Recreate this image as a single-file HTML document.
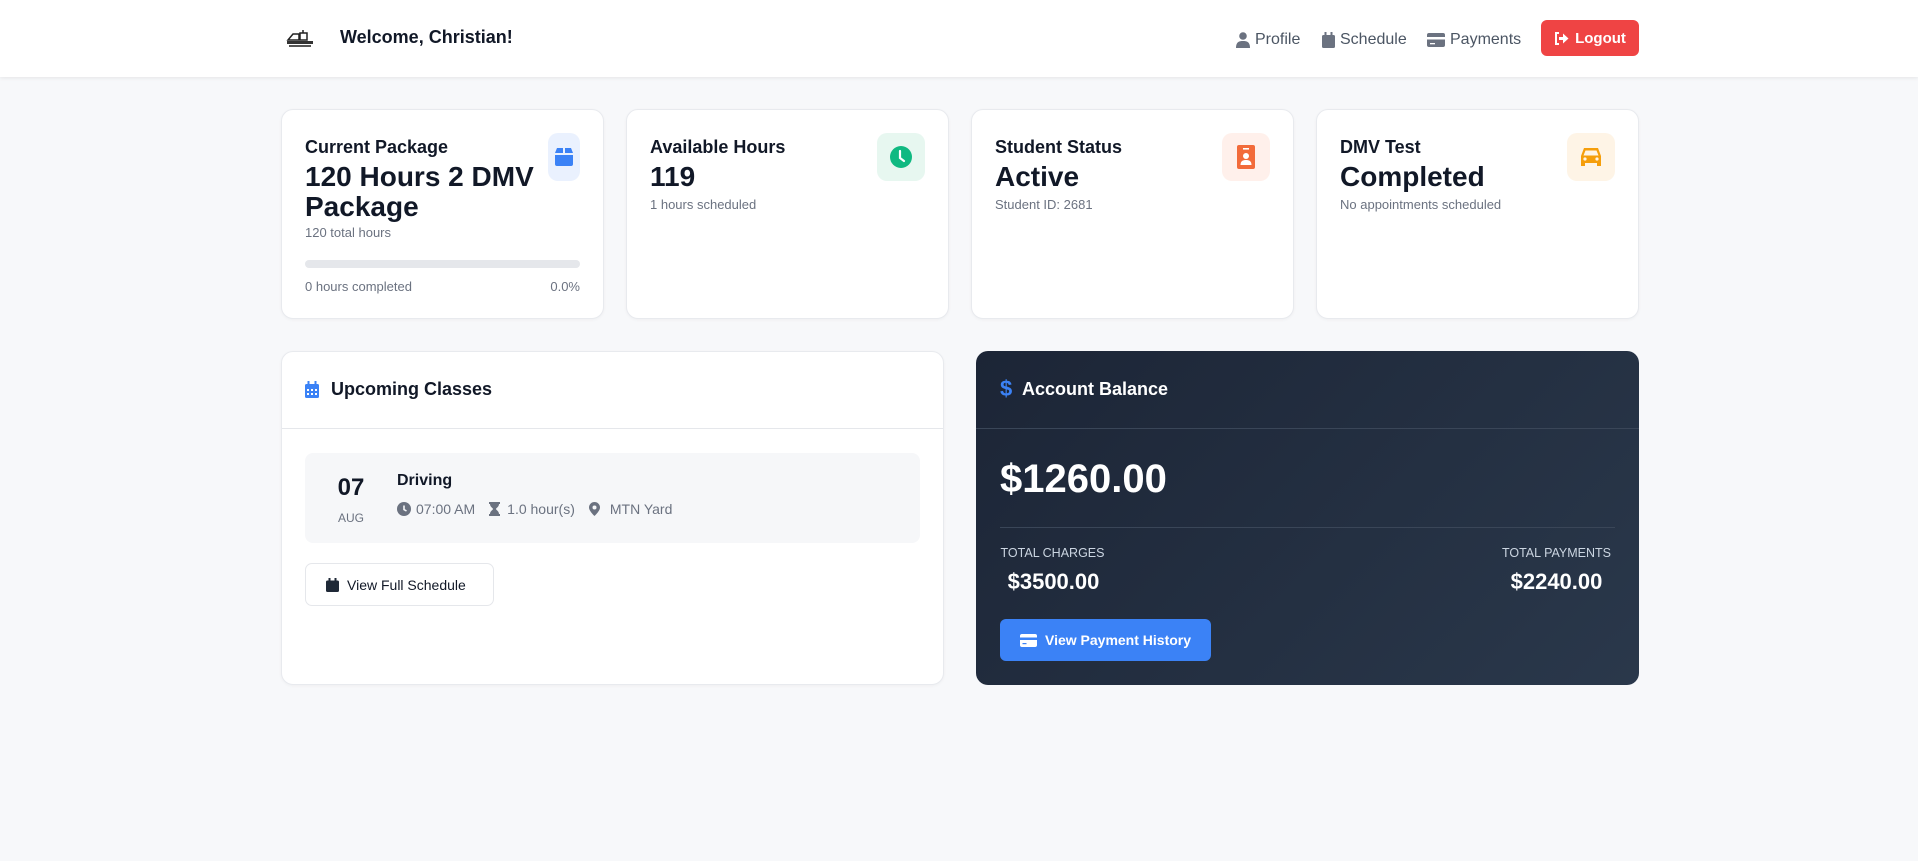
<!DOCTYPE html>
<html><head><meta charset="utf-8"><style>
*{box-sizing:border-box;margin:0;padding:0}
body{width:1918px;height:861px;background:#f7f8fa;font-family:"Liberation Sans",sans-serif;color:#111827;position:relative;overflow:hidden}
.abs{position:absolute}
.hdr{left:0;top:0;width:1918px;height:77px;background:#fff;box-shadow:0 1px 4px rgba(0,0,0,.08)}
.nav{color:#4b5563;font-size:16px;top:31px;display:flex;align-items:center;gap:5px}
.card{background:#fff;border:1px solid #e8eaee;border-radius:12px;box-shadow:0 1px 3px rgba(0,0,0,.04)}
.sc{top:109px;width:323px;height:210px}
.t{font-size:18px;font-weight:bold;color:#111827;white-space:nowrap}
.big{font-size:28px;font-weight:bold;color:#111827;line-height:30px}
.sub{font-size:13px;color:#6b7280}
.ib{width:48px;height:48px;border-radius:10px;display:flex;align-items:center;justify-content:center}
.meta{font-size:14px;color:#6b7280;display:flex;align-items:center}
</style></head><body>
<div class="abs hdr"></div>
<svg class="abs" style="left:285px;top:30px" width="32" height="18" viewBox="0 0 32 18"><path d="M3 10 L8 4 H14 V10 Z M15 3 H22 V10 H15 Z M18 0 V3" fill="none" stroke="#222" stroke-width="1.5"/><rect x="2" y="11" width="26" height="3" fill="#333"/><rect x="4" y="15" width="22" height="2" fill="#555"/></svg>
<div class="abs" style="left:340px;top:27px;font-size:18px;font-weight:bold;color:#111827">Welcome, Christian!</div>
<div class="abs nav" style="left:1236px"><svg width="14" height="16" viewBox="0 0 14 16"><circle cx="7" cy="4" r="3.8" fill="#6b7280"/><path d="M0 16 C0 10 3 9 7 9 C11 9 14 10 14 16Z" fill="#6b7280"/></svg><span>Profile</span></div>
<div class="abs nav" style="left:1322px"><svg width="13" height="16" viewBox="0 0 13 16"><rect x="0" y="3" width="13" height="13" rx="1.5" fill="#6b7280"/><rect x="2.5" y="0" width="2" height="4" fill="#6b7280"/><rect x="8.5" y="0" width="2" height="4" fill="#6b7280"/></svg><span>Schedule</span></div>
<div class="abs nav" style="left:1427px"><svg width="18" height="14" viewBox="0 0 18 14"><rect x="0" y="0" width="18" height="14" rx="2" fill="#6b7280"/><rect x="0" y="4" width="18" height="2.5" fill="#fff"/><rect x="3" y="10" width="5" height="1.3" fill="#fff"/></svg><span>Payments</span></div>
<div class="abs" style="left:1541px;top:20px;width:98px;height:36px;background:#ef4444;border-radius:6px;color:#fff;font-size:15px;font-weight:bold;display:flex;align-items:center;justify-content:center;gap:6px"><svg width="15" height="13" viewBox="0 0 15 13"><path d="M5 1H2v11h3" fill="none" stroke="#fff" stroke-width="2"/><path d="M5 5h4V1.5L14.5 6.5 9 11.5V8H5z" fill="#fff"/></svg>Logout</div>

<div class="abs card sc" style="left:281px"></div>
<div class="abs t" style="left:305px;top:137px">Current Package</div>
<div class="abs big" style="left:305px;top:162px;width:250px">120 Hours 2 DMV Package</div>
<div class="abs sub" style="left:305px;top:225px">120 total hours</div>
<div class="abs" style="left:305px;top:260px;width:275px;height:8px;background:#e5e7eb;border-radius:4px"></div>
<div class="abs sub" style="left:305px;top:279px">0 hours completed</div>
<div class="abs sub" style="left:550px;top:279px;width:30px;text-align:right">0.0%</div>
<div class="abs ib" style="left:548px;top:133px;width:32px;background:#eaf1fe"><svg width="20" height="18" viewBox="0 0 20 18"><path d="M1 7H19V16a2 2 0 0 1-2 2H3a2 2 0 0 1-2-2Z M1 5 3 0H9V5Z M11 5V0H17L19 5Z" fill="#3b82f6"/></svg></div>

<div class="abs card sc" style="left:626px"></div>
<div class="abs t" style="left:650px;top:137px">Available Hours</div>
<div class="abs big" style="left:650px;top:162px">119</div>
<div class="abs sub" style="left:650px;top:197px">1 hours scheduled</div>
<div class="abs ib" style="left:877px;top:133px;background:#e7f7f0"><svg width="24" height="24" viewBox="0 0 24 24"><circle cx="12" cy="12" r="11" fill="#10b981"/><path d="M11 6v7l4 3" fill="none" stroke="#fff" stroke-width="2.2" stroke-linecap="round"/></svg></div>

<div class="abs card sc" style="left:971px"></div>
<div class="abs t" style="left:995px;top:137px">Student Status</div>
<div class="abs big" style="left:995px;top:162px">Active</div>
<div class="abs sub" style="left:995px;top:197px">Student ID: 2681</div>
<div class="abs ib" style="left:1222px;top:133px;background:#fff0eb"><svg width="18" height="24" viewBox="0 0 18 24"><rect width="18" height="24" rx="2" fill="#f26b3a"/><rect x="6" y="3" width="6" height="1.6" fill="#fff"/><circle cx="9" cy="11" r="3" fill="#fff"/><path d="M3.5 20c0-4 2.5-5 5.5-5s5.5 1 5.5 5z" fill="#fff"/></svg></div>

<div class="abs card sc" style="left:1316px"></div>
<div class="abs t" style="left:1340px;top:137px">DMV Test</div>
<div class="abs big" style="left:1340px;top:162px">Completed</div>
<div class="abs sub" style="left:1340px;top:197px">No appointments scheduled</div>
<div class="abs ib" style="left:1567px;top:133px;background:#fef4e6"><svg width="24" height="22" viewBox="0 0 24 22"><path d="M5 2h14l3 8v10h-4v-3H6v3H2V10Z" fill="#f59e0b"/><path d="M6.5 4.5h11l2 5h-15z" fill="#fef4e6"/><circle cx="6" cy="13" r="1.6" fill="#fef4e6"/><circle cx="18" cy="13" r="1.6" fill="#fef4e6"/></svg></div>

<div class="abs card" style="left:281px;top:351px;width:663px;height:334px"></div>
<div class="abs" style="left:282px;top:428px;width:661px;height:1px;background:#e5e7eb"></div>
<svg class="abs" style="left:305px;top:381px" width="14" height="17" viewBox="0 0 14 17"><rect y="3" width="14" height="14" rx="1.5" fill="#3b82f6"/><rect x="2.5" width="2" height="4" fill="#3b82f6"/><rect x="9.5" width="2" height="4" fill="#3b82f6"/><g fill="#fff"><rect x="2" y="8" width="2" height="2"/><rect x="6" y="8" width="2" height="2"/><rect x="10" y="8" width="2" height="2"/><rect x="2" y="12" width="2" height="2"/><rect x="6" y="12" width="2" height="2"/><rect x="10" y="12" width="2" height="2"/></g></svg>
<div class="abs t" style="left:331px;top:379px">Upcoming Classes</div>
<div class="abs" style="left:305px;top:453px;width:615px;height:90px;background:#f6f7f9;border-radius:8px"></div>
<div class="abs" style="left:326px;top:474px;width:50px;text-align:center;font-size:24px;font-weight:bold">07</div>
<div class="abs" style="left:326px;top:511px;width:50px;text-align:center;font-size:12px;color:#6b7280">AUG</div>
<div class="abs" style="left:397px;top:472px;font-size:16px;font-weight:bold">Driving</div>
<div class="abs meta" style="left:397px;top:501px">
<svg width="14" height="14" viewBox="0 0 14 14"><circle cx="7" cy="7" r="7" fill="#6b7280"/><path d="M7 3.5V7.5L9.5 9" fill="none" stroke="#f6f7f9" stroke-width="1.6"/></svg><span style="margin-left:5px">07:00 AM</span>
<svg style="margin-left:14px" width="11" height="14" viewBox="0 0 11 14"><path d="M0 0h11v2H10C10 5 7 6 7 7s3 2 3 5h1v2H0v-2h1c0-3 3-4 3-5S1 5 1 2H0z" fill="#6b7280"/></svg><span style="margin-left:7px">1.0 hour(s)</span>
<svg style="margin-left:14px" width="11" height="14" viewBox="0 0 11 14"><path d="M5.5 0A5.5 5.5 0 0 1 11 5.5C11 9 5.5 14 5.5 14S0 9 0 5.5A5.5 5.5 0 0 1 5.5 0Z" fill="#6b7280"/><circle cx="5.5" cy="5.5" r="2" fill="#f6f7f9"/></svg><span style="margin-left:10px">MTN Yard</span></div>
<div class="abs" style="left:305px;top:563px;width:189px;height:43px;border:1px solid #e5e7eb;border-radius:7px;background:#fff;display:flex;align-items:center;padding-left:20px;font-size:14px;color:#111827"><svg width="13" height="14" viewBox="0 0 13 14"><rect y="2.5" width="13" height="11.5" rx="1.5" fill="#1f2937"/><rect x="2.5" width="2" height="3" fill="#1f2937"/><rect x="8.5" width="2" height="3" fill="#1f2937"/></svg><span style="margin-left:8px">View Full Schedule</span></div>

<div class="abs" style="left:976px;top:351px;width:663px;height:334px;border-radius:12px;background:linear-gradient(135deg,#1c2536,#2a384b)"></div>
<div class="abs" style="left:976px;top:428px;width:663px;height:1px;background:#3a4658"></div>
<div class="abs" style="left:1000px;top:376px;font-size:22px;font-weight:bold;color:#3b82f6">$</div>
<div class="abs t" style="left:1022px;top:379px;color:#fff">Account Balance</div>
<div class="abs" style="left:1000px;top:457px;font-size:40px;font-weight:bold;color:#fff">$1260.00</div>
<div class="abs" style="left:1000px;top:527px;width:615px;height:1px;background:#3a4658"></div>
<div class="abs" style="left:1000px;top:546px;width:105px;text-align:center;color:#cbd5e1;font-size:12.5px">TOTAL CHARGES</div>
<div class="abs" style="left:996px;top:569px;width:115px;text-align:center;color:#fff;font-size:22px;font-weight:bold">$3500.00</div>
<div class="abs" style="left:1498px;top:546px;width:117px;text-align:center;color:#cbd5e1;font-size:12.5px">TOTAL PAYMENTS</div>
<div class="abs" style="left:1498px;top:569px;width:117px;text-align:center;color:#fff;font-size:22px;font-weight:bold">$2240.00</div>
<div class="abs" style="left:1000px;top:619px;width:211px;height:42px;border-radius:6px;background:#3b82f6;color:#fff;font-size:14px;font-weight:bold;display:flex;align-items:center;padding-left:20px"><svg width="17" height="13" viewBox="0 0 17 13"><rect width="17" height="13" rx="2" fill="#fff"/><rect y="3.5" width="17" height="2.5" fill="#3b82f6"/><rect x="2.5" y="9" width="4" height="1.2" fill="#3b82f6"/></svg><span style="margin-left:8px">View Payment History</span></div>
</body></html>
